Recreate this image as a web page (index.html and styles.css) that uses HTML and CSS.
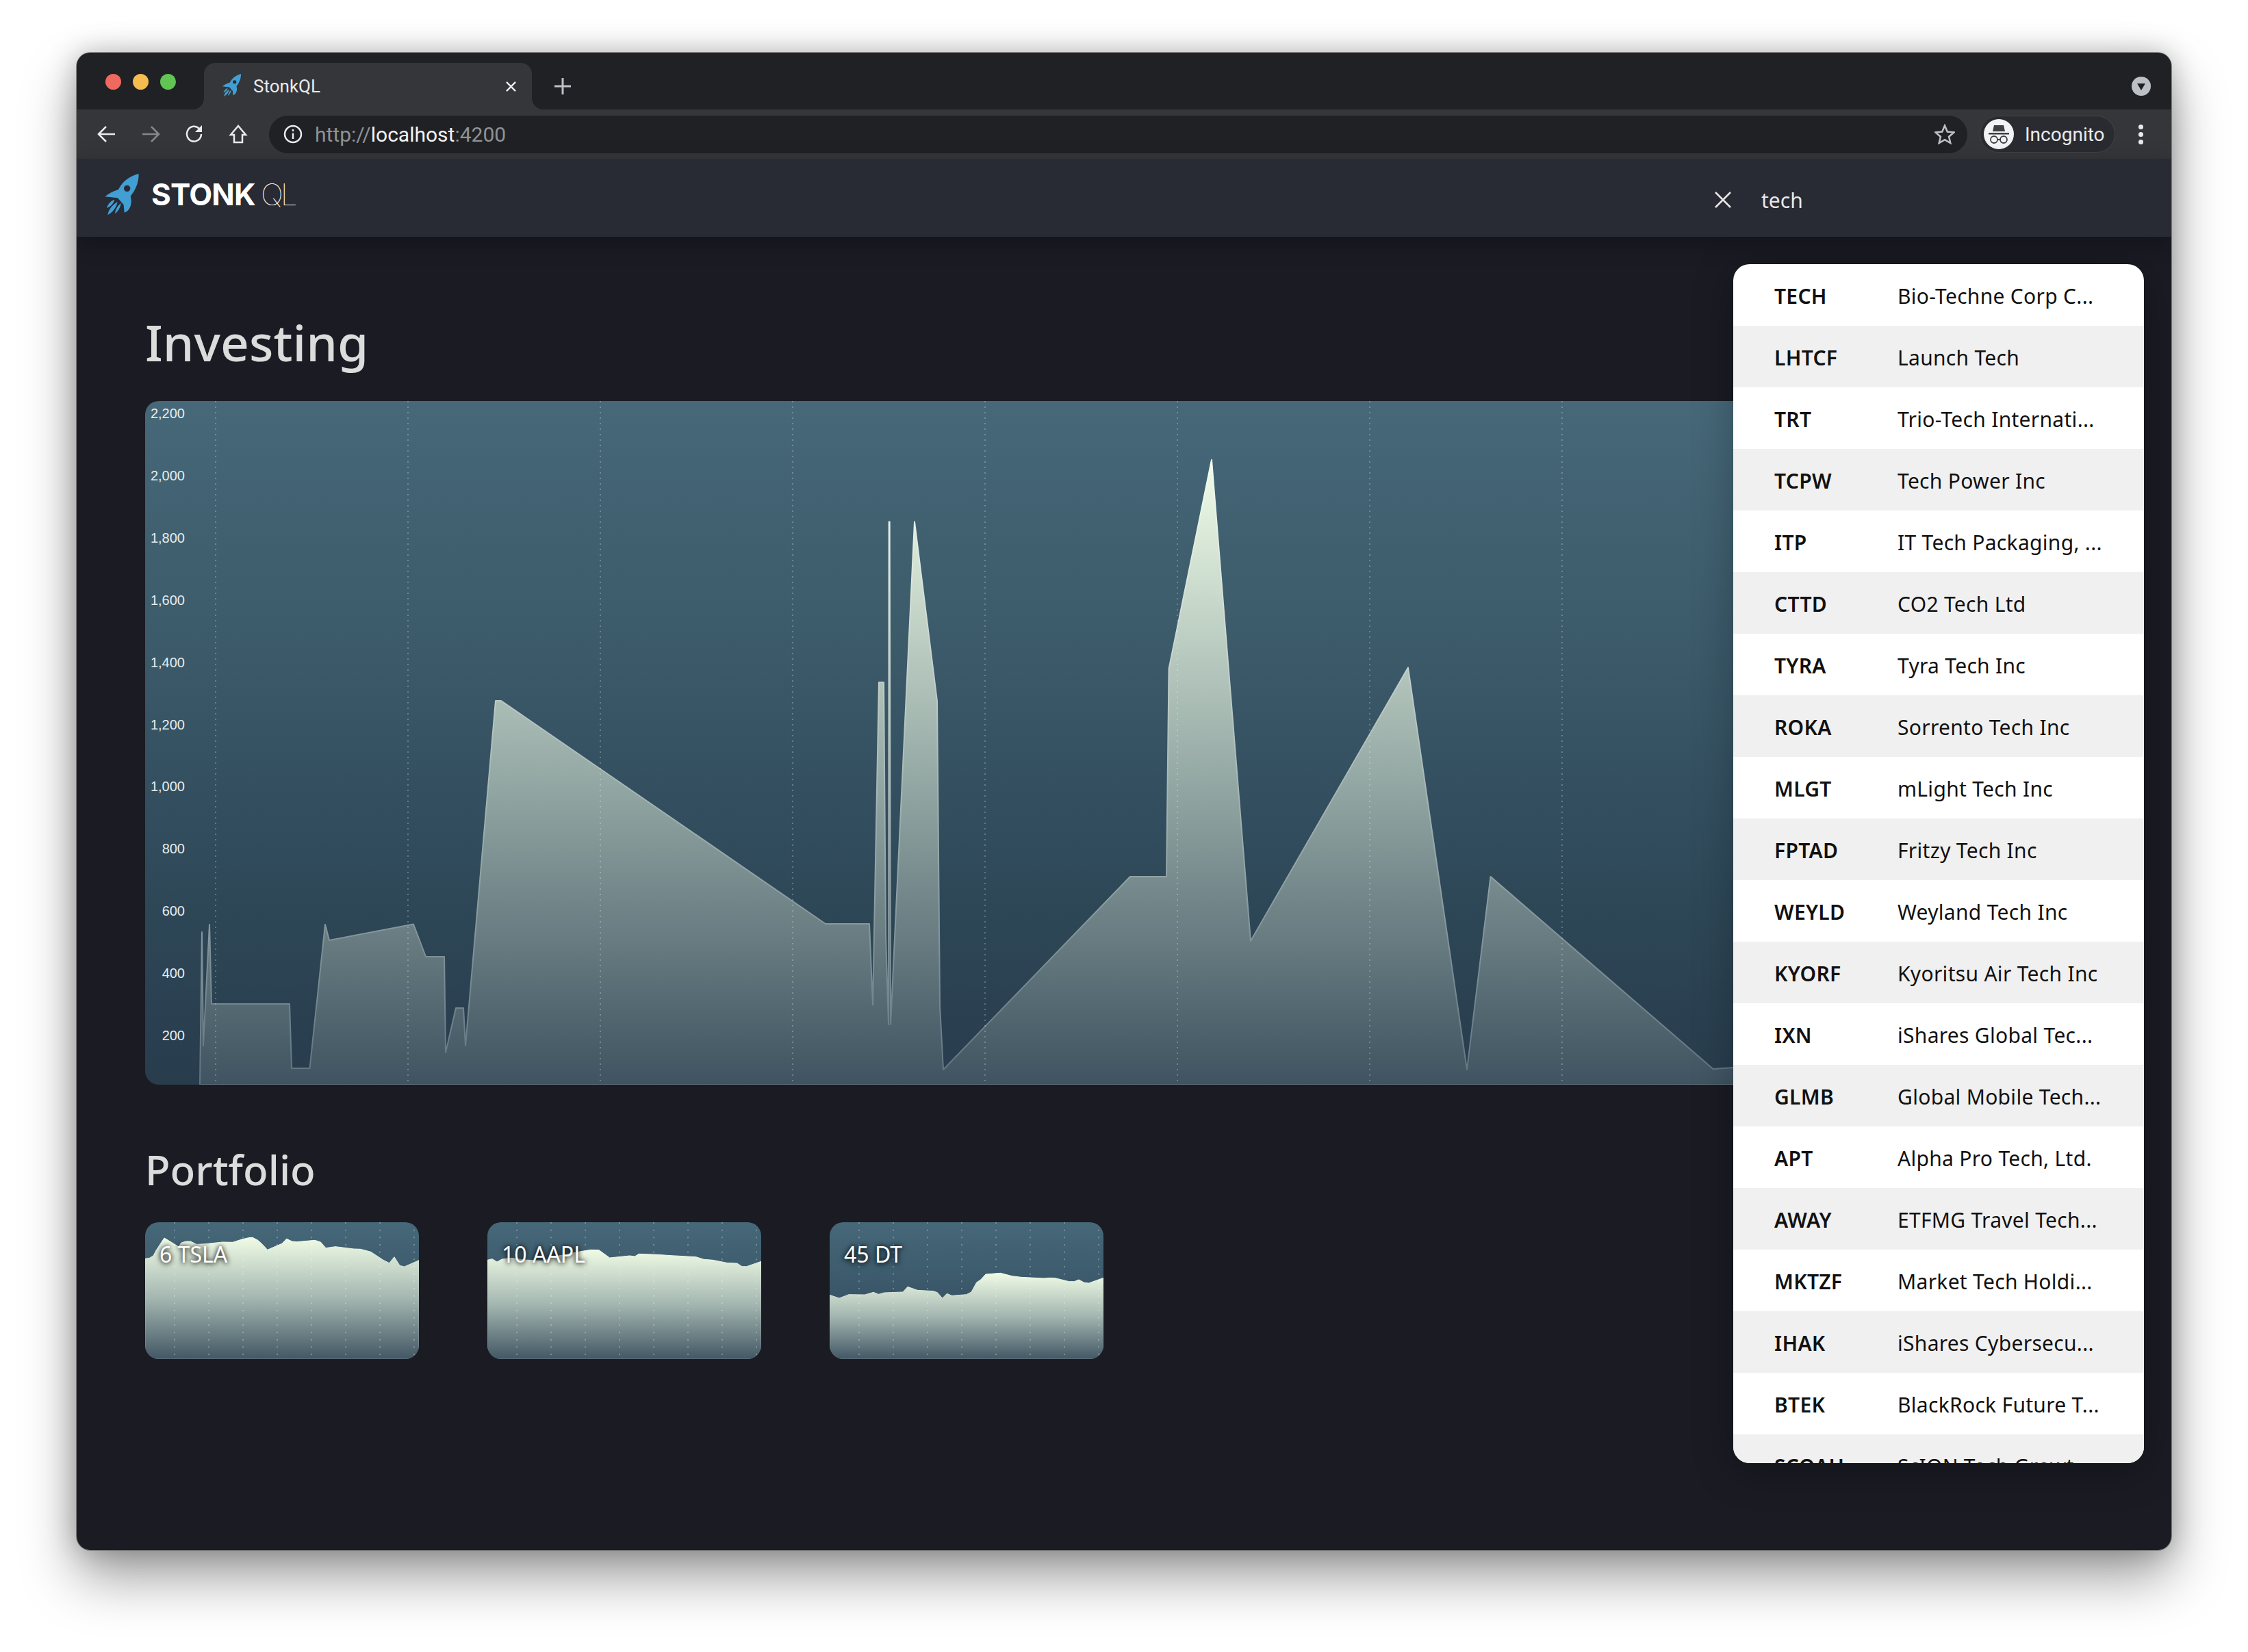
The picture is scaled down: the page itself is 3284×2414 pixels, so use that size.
FILE: index.html
```html
<!DOCTYPE html>
<html lang="en">

<head>
  <meta charset="UTF-8">
  <title>StonkQL</title>
  <link rel="stylesheet" href="styles.css">
</head>

<body>
  <svg class="defs">
    <defs>
      <symbol id="rocket" viewBox="40 42 148 180">
        <path d="M188 42C160 48 130 65 110 92L98 112C75 118 55 130 40 142L96 148L122 178L125 212C148 205 162 175 152 140C175 112 188 80 188 42Z" fill="#429fd3"/>
        <circle cx="137" cy="106" r="14" fill="#282a34"/>
        <path d="M48 192C52 175 65 160 82 155C78 172 65 185 48 192Z" fill="#429fd3"/>
        <path d="M52 222C55 200 72 178 95 165C90 190 75 210 52 222Z" fill="#429fd3"/>
        <path d="M84 216C86 198 95 182 110 170C107 190 99 205 84 216Z" fill="#429fd3"/>
      </symbol>
      <linearGradient id="mainFill" gradientUnits="userSpaceOnUse" x1="0" y1="672" x2="0" y2="1585">
        <stop offset="0" stop-color="#f0fde8"/>
        <stop offset="0.5" stop-color="#96aaa6"/>
        <stop offset="1" stop-color="#3f5361"/>
      </linearGradient>
      <linearGradient id="mainLine" gradientUnits="userSpaceOnUse" x1="0" y1="672" x2="0" y2="1585">
        <stop offset="0" stop-color="#f6fff2"/>
        <stop offset="1" stop-color="#5f7480"/>
      </linearGradient>
      <linearGradient id="thumbFill" x1="0" y1="0" x2="0" y2="1">
        <stop offset="0" stop-color="#effbe5"/>
        <stop offset="0.5" stop-color="#a3b6b0"/>
        <stop offset="1" stop-color="#435765"/>
      </linearGradient>
      <linearGradient id="thumbLine" x1="0" y1="0" x2="0" y2="1">
        <stop offset="0" stop-color="#f6fff2"/>
        <stop offset="1" stop-color="#6f828c"/>
      </linearGradient>
    </defs>
  </svg>

  <div class="window">
    <div class="titlebar">
      <div class="lights">
        <span class="light red"></span>
        <span class="light yellow"></span>
        <span class="light green"></span>
      </div>
      <div class="tab">
        <svg class="favicon"><use href="#rocket"/></svg>
        <span class="tab-title">StonkQL</span>
        <svg class="tab-close" viewBox="0 0 16 16"><path d="M1 1L15 15M15 1L1 15"/></svg>
      </div>
      <svg class="new-tab" viewBox="0 0 24 24"><path d="M12 0V24M0 12H24"/></svg>
      <svg class="tab-search" viewBox="0 0 28 28">
        <circle cx="14" cy="14" r="14" fill="#bdc1c6"/>
        <path d="M8 10H20L14 20Z" fill="#202124"/>
      </svg>
    </div>

    <div class="toolbar">
      <svg class="nav-icon" viewBox="0 0 28 28"><path d="M26 14H3M13 3L2 14L13 25"/></svg>
      <svg class="nav-icon dim" viewBox="0 0 28 28"><path d="M2 14H25M15 3L26 14L15 25"/></svg>
      <svg class="nav-icon" viewBox="0 0 28 28"><path d="M24 14A10.500 11 0 1 1 21 6"/><path class="solid" d="M25 1V11H15Z"/></svg>
      <svg class="nav-icon" viewBox="0 0 28 28"><path d="M14 2L3 15H8V26H20V15H25Z"/></svg>
      <div class="omnibox">
        <svg class="info" viewBox="0 0 28 28">
          <circle cx="14" cy="14" r="12"/>
          <path d="M14 12.500V21M14 7V10"/>
        </svg>
        <span class="url"><span class="url-dim">http://</span>localhost<span class="url-dim">:4200</span></span>
        <svg class="star" viewBox="0 0 30 30"><path d="M15 2.500L18.800 11.500L28.500 12.300L21.100 18.700L23.300 28L15 23.100L6.700 28L8.900 18.700L1.500 12.300L11.200 11.500Z"/></svg>
      </div>
      <div class="profile">
        <svg class="avatar" viewBox="0 0 44 44">
          <circle cx="22" cy="22" r="22" fill="#f1f3f4"/>
          <path d="M15 9L29 9L31 18H13Z" fill="#3c4043"/>
          <rect x="7" y="20" width="30" height="2.500" fill="#3c4043"/>
          <circle cx="15" cy="30" r="5" fill="none" stroke="#3c4043" stroke-width="1.800"/>
          <circle cx="29" cy="30" r="5" fill="none" stroke="#3c4043" stroke-width="1.800"/>
          <path d="M20 30H24" stroke="#3c4043" stroke-width="1.800"/>
        </svg>
        <span class="profile-name">Incognito</span>
      </div>
      <div class="menu-dots"><span></span><span></span><span></span></div>
    </div>

    <header class="app-header">
      <div class="logo">
        <svg class="logo-mark"><use href="#rocket"/></svg>
        <span class="logo-bold">STONK</span><span class="logo-thin">QL</span>
      </div>
      <div class="search">
        <svg class="search-clear" viewBox="0 0 24 24"><path d="M1 1L23 23M23 1L1 23"/></svg>
        <span class="search-text">tech</span>
      </div>
    </header>

    <main class="content">
      <h1 class="page-title">Investing</h1>

      <div class="chart">
        <svg class="chart-svg" viewBox="212 586 2860 999">
          <polygon fill="url(#mainFill)" stroke="url(#mainLine)" stroke-width="2" stroke-linejoin="round" points="292,1585 295,1362 297,1528 306,1351 309,1467 423,1467 426,1561 452.500,1561 475,1351 481,1374 604,1350.500 622,1398 649,1398 651,1538 666,1473 677,1473 680,1528 724,1024 732,1024 1206,1350 1270,1350 1275,1468.500 1284,997 1291,997 1294,1369 1298,1497 1298.700,762.500 1299.600,762.500 1301,1497 1336,762.500 1369,1024.600 1373,1470 1378,1563 1651,1281 1704,1281 1707.600,977 1770,672 1827,1375 2057,975.600 2143,1563 2177.500,1281 2502.500,1562 2532,1560 3072,1540 3072,1585"/>
          <path class="grid-main" d="M315 586V1580M596 586V1580M877 586V1580M1158 586V1580M1439 586V1580M1720 586V1580M2001 586V1580M2282 586V1580M2563 586V1580"/>
          <g class="axis">
            <text x="270" y="611">2,200</text>
            <text x="270" y="702">2,000</text>
            <text x="270" y="793">1,800</text>
            <text x="270" y="884">1,600</text>
            <text x="270" y="975">1,400</text>
            <text x="270" y="1066">1,200</text>
            <text x="270" y="1156">1,000</text>
            <text x="270" y="1247">800</text>
            <text x="270" y="1338">600</text>
            <text x="270" y="1429">400</text>
            <text x="270" y="1520">200</text>
          </g>
        </svg>
      </div>

      <h2 class="section-title">Portfolio</h2>

      <div class="cards">
        <div class="card">
          <svg class="card-svg" viewBox="36 18 1200 600">
            <polygon fill="url(#thumbFill)" stroke="url(#thumbLine)" stroke-width="3" points="36,178 55,175 72,165 85,140 120,87 150,105 182,125 195,108 215,102 235,102 262,115 300,113 375,105 420,106 460,93 490,86 507,85 530,97 550,115 572,139 635,112 656,91 680,102 700,104 780,97 805,105 828,131 870,125 950,135 980,136 1025,148 1080,184 1106,197 1128,170 1152,208 1172,213 1236,185 1236,618 36,618"/>
            <path class="grid-card" d="M165 18V618M315 18V618M465 18V618M615 18V618M765 18V618M915 18V618M1065 18V618M1215 18V618"/>
          </svg>
          <span class="card-label">6 TSLA</span>
        </div>
        <div class="card">
          <svg class="card-svg" viewBox="36 18 1200 600">
            <polygon fill="url(#thumbFill)" stroke="url(#thumbLine)" stroke-width="3" points="36,184 57,179 78,192 100,180 140,175 200,183 280,188 350,165 440,147 490,139 525,140 572,174 660,165 682,168 700,157 780,160 840,164 950,170 985,181 1025,184 1085,196 1130,198 1152,212 1172,212 1236,190 1236,618 36,618"/>
            <path class="grid-card" d="M165 18V618M315 18V618M465 18V618M615 18V618M765 18V618M915 18V618M1065 18V618M1215 18V618"/>
          </svg>
          <span class="card-label">10 AAPL</span>
        </div>
        <div class="card">
          <svg class="card-svg" viewBox="36 18 1200 600">
            <polygon fill="url(#thumbFill)" stroke="url(#thumbLine)" stroke-width="3" points="36,337 78,351 120,335 190,336 228,325 250,334 275,327 357,324 378,301 420,316 490,320 508,326 530,351 550,331 572,340 635,335 657,324 680,282 698,270 720,246 785,241 835,254 875,259 975,264 1000,262 1025,263 1085,278 1108,278 1128,270 1152,283 1172,285 1236,262 1236,618 36,618"/>
            <path class="grid-card" d="M165 18V618M315 18V618M465 18V618M615 18V618M765 18V618M915 18V618M1065 18V618M1215 18V618"/>
          </svg>
          <span class="card-label">45 DT</span>
        </div>
      </div>

      <ul class="results">
        <li class="result"><span class="ticker">TECH</span><span class="name">Bio-Techne Corp C...</span></li>
        <li class="result"><span class="ticker">LHTCF</span><span class="name">Launch Tech</span></li>
        <li class="result"><span class="ticker">TRT</span><span class="name">Trio-Tech Internati...</span></li>
        <li class="result"><span class="ticker">TCPW</span><span class="name">Tech Power Inc</span></li>
        <li class="result"><span class="ticker">ITP</span><span class="name">IT Tech Packaging, ...</span></li>
        <li class="result"><span class="ticker">CTTD</span><span class="name">CO2 Tech Ltd</span></li>
        <li class="result"><span class="ticker">TYRA</span><span class="name">Tyra Tech Inc</span></li>
        <li class="result"><span class="ticker">ROKA</span><span class="name">Sorrento Tech Inc</span></li>
        <li class="result"><span class="ticker">MLGT</span><span class="name">mLight Tech Inc</span></li>
        <li class="result"><span class="ticker">FPTAD</span><span class="name">Fritzy Tech Inc</span></li>
        <li class="result"><span class="ticker">WEYLD</span><span class="name">Weyland Tech Inc</span></li>
        <li class="result"><span class="ticker">KYORF</span><span class="name">Kyoritsu Air Tech Inc</span></li>
        <li class="result"><span class="ticker">IXN</span><span class="name">iShares Global Tec...</span></li>
        <li class="result"><span class="ticker">GLMB</span><span class="name">Global Mobile Tech...</span></li>
        <li class="result"><span class="ticker">APT</span><span class="name">Alpha Pro Tech, Ltd.</span></li>
        <li class="result"><span class="ticker">AWAY</span><span class="name">ETFMG Travel Tech...</span></li>
        <li class="result"><span class="ticker">MKTZF</span><span class="name">Market Tech Holdi...</span></li>
        <li class="result"><span class="ticker">IHAK</span><span class="name">iShares Cybersecu...</span></li>
        <li class="result"><span class="ticker">BTEK</span><span class="name">BlackRock Future T...</span></li>
        <li class="result"><span class="ticker">SCOAU</span><span class="name">ScION Tech Growt...</span></li>
      </ul>
    </main>
  </div>
</body>

</html>
```

FILE: styles.css
```css
*{
  box-sizing: border-box;
}
body{
  margin:0;
  padding:77px 112px 149px;
  height:2414px;
  background:#fff;
  overflow:hidden;
  font-family:"Noto Sans",sans-serif;
}
.defs{
  position:absolute;
  width:0;
  height:0;
}

/* browser frame */
.window{
  display:flex;
  flex-direction:column;
  height:2188px;
  border-radius:20px;
  overflow:hidden;
  background:#1a1b23;
}
body::before{
  content:"";
  position:absolute;
  top:77px;
  left:112px;
  width:3060px;
  height:2188px;
  border-radius:20px;
  box-shadow:0 0 0 1px rgba(70,70,70,.5),0 40px 80px rgba(0,0,0,.38),0 0 40px rgba(0,0,0,.25);
}
.titlebar{
  display:flex;
  align-items:flex-end;
  height:83px;
  padding-right:30px;
  background:#202124;
  position:relative;
  flex:none;
}
.lights{
  display:flex;
  gap:17px;
  align-self:flex-start;
  padding:31px 0 0 42px;
  width:186px;
}
.light{
  width:23px;
  height:23px;
  border-radius:50%;
}
.red{background:#ee6a5f;}
.yellow{background:#f5bd4f;}
.green{background:#61c554;}
.tab{
  position:relative;
  display:flex;
  align-items:center;
  width:479px;
  height:68px;
  padding:0 23px 0 25px;
  background:#35363a;
  border-radius:16px 16px 0 0;
}
.tab::before,.tab::after{
  content:"";
  position:absolute;
  bottom:0;
  width:16px;
  height:16px;
}
.tab::before{
  left:-16px;
  background:radial-gradient(circle at 0 0,#202124 15.500px,#35363a 16px);
}
.tab::after{
  right:-16px;
  background:radial-gradient(circle at 100% 0,#202124 15.500px,#35363a 16px);
}
.favicon{
  width:31px;
  height:33px;
  margin-bottom:4px;
}
.tab-title{
  flex:1;
  margin-left:16px;
  color:#e8eaed;
  font:26px Roboto,sans-serif;
}
.tab-close{
  width:15px;
  height:15px;
  fill:none;
  stroke:#e8eaed;
  stroke-width:2.500;
}
.new-tab{
  width:24px;
  height:24px;
  margin:0 0 22px 33px;
  fill:none;
  stroke:#bdc1c6;
  stroke-width:3;
}
.tab-search{
  width:28px;
  height:28px;
  margin:0 0 20px auto;
}

.toolbar{
  display:flex;
  align-items:center;
  height:72px;
  padding:0 30px 0 0;
  background:#35363a;
  flex:none;
}
.nav-icon{
  width:28px;
  height:28px;
  margin-left:36px;
  fill:none;
  stroke:#e8eaed;
  stroke-width:2.500;
}
.nav-icon:first-child{
  margin-left:30px;
}
.nav-icon.dim{
  stroke:#85878a;
}
.nav-icon .solid{
  fill:#e8eaed;
  stroke:none;
}
.omnibox{
  display:flex;
  align-items:center;
  width:2481px;
  height:55px;
  margin-left:31px;
  padding:0 14px 0 21px;
  background:#202124;
  border-radius:28px;
}
.info{
  width:28px;
  height:28px;
  fill:none;
  stroke:#e8eaed;
  stroke-width:2.500;
}
.url{
  flex:1;
  margin-left:18px;
  color:#f1f3f4;
  font:30px Roboto,sans-serif;
}
.url-dim{
  color:#8f9296;
}
.star{
  width:30px;
  height:30px;
  margin-right:4px;
  fill:none;
  stroke:#bdc1c6;
  stroke-width:2.500;
}
.profile{
  display:flex;
  align-items:center;
  width:198px;
  height:54px;
  margin-left:18px;
  padding-left:5px;
  background:#2a2b30;
  border:1px solid #424347;
  border-radius:27px;
}
.avatar{
  width:44px;
  height:44px;
}
.profile-name{
  margin-left:16px;
  color:#e8eaed;
  font:28px Roboto,sans-serif;
}
.menu-dots{
  display:flex;
  flex-direction:column;
  gap:4px;
  margin-left:34px;
}
.menu-dots span{
  width:7px;
  height:7px;
  border-radius:50%;
  background:#e8eaed;
}

/* app header */
.app-header{
  position:relative;
  z-index:2;
  display:flex;
  align-items:center;
  justify-content:space-between;
  height:114px;
  flex:none;
  background:#282a34;
  box-shadow:0 8px 30px rgba(0,0,0,.25);
}
.logo{
  display:flex;
  align-items:center;
  padding:0 0 10px 41px;
  color:#fff;
}
.logo-mark{
  width:50px;
  height:60px;
  margin-right:18px;
}
.logo-bold{
  font:700 44px Inter,sans-serif;
  letter-spacing:-.8px;
}
.logo-thin{
  margin-left:8px;
  font:100 44px Inter,sans-serif;
  letter-spacing:-4px;
}
.search{
  display:flex;
  align-items:center;
  gap:44px;
  width:667px;
  padding-top:6px;
  color:#e8e8e8;
}
.search-clear{
  width:24px;
  height:24px;
  fill:none;
  stroke:#e8e8e8;
  stroke-width:2.500;
}
.search-text{
  font-size:30px;
}

/* page */
.content{
  position:relative;
  flex:1;
  padding:100px 100px 0;
}
.page-title{
  height:100px;
  margin:0 0 40px;
  padding-top:4px;
  color:#dcdcdc;
  font-size:73px;
  font-weight:500;
  line-height:100px;
}
.chart{
  height:999px;
  border-radius:20px;
  overflow:hidden;
  background:linear-gradient(180deg,#466878 0%,#3a5868 40%,#2e4858 72%,#283c4c 100%);
}
.chart-svg{
  display:block;
  width:100%;
  height:100%;
}
.grid-main{
  fill:none;
  stroke:rgba(255,255,255,.25);
  stroke-width:2;
  stroke-dasharray:2 6;
}
.axis text{
  fill:#e6ecec;
  font:20px "Liberation Sans",sans-serif;
  text-anchor:end;
}
.section-title{
  height:80px;
  margin:84px 0 37px;
  color:#dcdcdc;
  font-size:60px;
  font-weight:500;
  line-height:80px;
}
.cards{
  display:flex;
  gap:100px;
}
.card{
  position:relative;
  width:400px;
  height:200px;
  border-radius:20px;
  overflow:hidden;
  background:linear-gradient(180deg,#466878 0%,#385466 60%,#2c4152 100%);
}
.card-svg{
  display:block;
  width:100%;
  height:100%;
}
.grid-card{
  fill:none;
  stroke:rgba(255,255,255,.28);
  stroke-width:6;
  stroke-dasharray:6 26;
}
.card-label{
  position:absolute;
  top:25px;
  left:21px;
  color:#fff;
  font-size:32px;
  line-height:44px;
  text-shadow:0 0 6px rgba(0,0,0,.9),0 2px 10px rgba(0,0,0,.6);
}

/* search results */
.results{
  position:absolute;
  top:40px;
  right:40px;
  width:600px;
  height:1752px;
  margin:0;
  padding:0;
  list-style:none;
  overflow:hidden;
  background:#fff;
  border-radius:24px;
  box-shadow:0 10px 60px rgba(0,0,0,.25);
}
.result{
  display:flex;
  align-items:center;
  height:90px;
  padding:3px 0 0 60px;
  color:#111;
  font-size:30px;
  letter-spacing:.3px;
  white-space:nowrap;
}
.result:nth-child(even){
  background:#f0f0f0;
}
.ticker{
  width:180px;
  font-weight:600;
}
```
